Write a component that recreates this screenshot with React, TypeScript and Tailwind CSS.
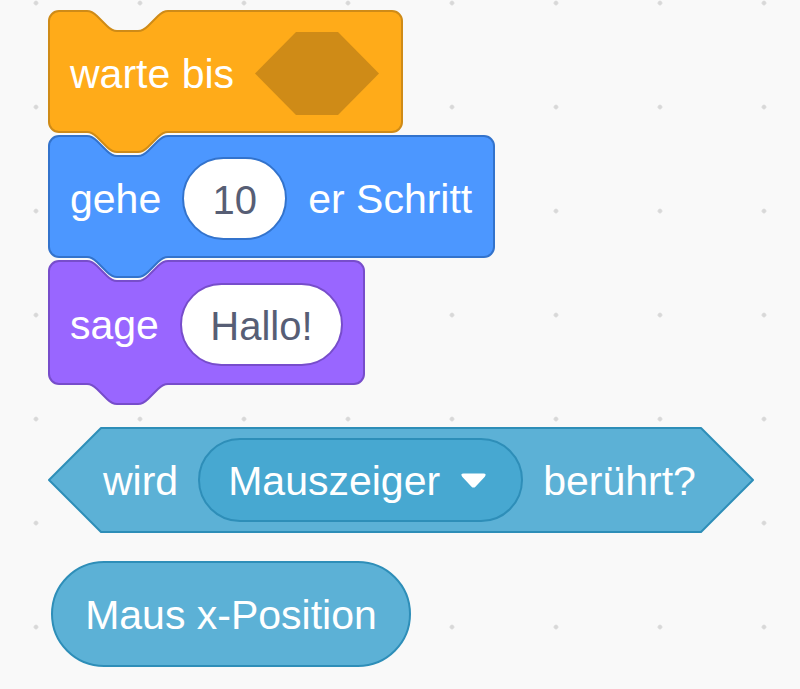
import React from "react";

const FONT = "font-['Liberation_Sans',Arial,Helvetica,sans-serif]";

function stackPath(w: number, h: number) {
  const r = 10;
  const n = 39;
  const notch = "c5,0 7.5,2.5 10,5 l10,10 c2.5,2.5 5,5 10,5 h21 c5,0 7.5,-2.5 10,-5 l10,-10 c2.5,-2.5 5,-5 10,-5";
  const tab = "c-5,0 -7.5,2.5 -10,5 l-10,10 c-2.5,2.5 -5,5 -10,5 h-21 c-5,0 -7.5,-2.5 -10,-5 l-10,-10 c-2.5,-2.5 -5,-5 -10,-5";
  return `M1,${1 + r} a${r},${r} 0 0 1 ${r},-${r} H${n} ${notch} H${w - 1 - r} a${r},${r} 0 0 1 ${r},${r} V${h - 1 - r} a${r},${r} 0 0 1 -${r},${r} H${n + 81} ${tab} H${1 + r} a${r},${r} 0 0 1 -${r},-${r} Z`;
}

function StackBlock({
  width,
  height,
  fill,
  stroke,
  children,
}: {
  width: number;
  height: number;
  fill: string;
  stroke: string;
  children: React.ReactNode;
}) {
  return (
    <div className="relative" style={{ width, height }}>
      {/* block shape lies under the block's content */}
      <svg
        className="pointer-events-none absolute inset-0 overflow-visible"
        width={width}
        height={height + 22}
      >
        <path d={stackPath(width, height)} fill={fill} stroke={stroke} strokeWidth={2} />
      </svg>
      <div className="relative flex h-full items-center gap-[21px] px-[22px] pt-[4px]">{children}</div>
    </div>
  );
}

function Label({ children }: { children: React.ReactNode }) {
  return <span className="block whitespace-nowrap pt-[2px] text-[41px] leading-none text-white">{children}</span>;
}

function TextInput({ value, border, width }: { value: string; border: string; width: string }) {
  return (
    <div
      className={`flex h-[83px] items-center justify-center rounded-full border-2 bg-white pt-[2px] ${border} ${width}`}
    >
      <span className="text-[40px] leading-none text-[#575e75]">{value}</span>
    </div>
  );
}

function DropdownArrow() {
  return (
    <svg width="27" height="17" viewBox="0 0 27 17">
      <path d="M3.5,1.5 H23.5 Q27,1.5 24.8,4.8 L15.7,14.4 Q13.5,16.8 11.3,14.4 L2.2,4.8 Q0,1.5 3.5,1.5 Z" fill="#ffffff" />
    </svg>
  );
}

export default function App() {
  return (
    <div className={`relative h-[689px] w-[800px] overflow-hidden bg-[#f9f9f9] ${FONT}`}>
      <svg className="absolute inset-0" width="800" height="689">
        <defs>
          <pattern id="grid" width="104" height="104" patternUnits="userSpaceOnUse">
            <circle cx="36" cy="3" r="2.3" fill="#e0e0e0" />
            <path d="M34,3 H38 M36,1 V5" stroke="#d6d6d6" strokeWidth="1.2" strokeLinecap="round" />
          </pattern>
        </defs>
        <rect width="800" height="689" fill="url(#grid)" />
      </svg>

      <div className="relative flex flex-col items-start gap-[28px] pl-[48px] pt-[10px]">
        <div className="flex flex-col gap-[2px]">
          <StackBlock width={355} height={123} fill="#ffab19" stroke="#cf8b17">
            <Label>warte bis</Label>
            <svg width="124" height="83" viewBox="0 0 124 83">
              <polygon points="0,41.5 41,0 83,0 124,41.5 83,83 41,83" fill="#cf8b17" />
            </svg>
          </StackBlock>
          <StackBlock width={447} height={123} fill="#4c97ff" stroke="#3373cc">
            <Label>gehe</Label>
            <TextInput value="10" border="border-[#3373cc]" width="w-[105px]" />
            <Label>er Schritt</Label>
          </StackBlock>
          <StackBlock width={317} height={125} fill="#9966ff" stroke="#774dcb">
            <Label>sage</Label>
            <TextInput value="Hallo!" border="border-[#774dcb]" width="w-[163px]" />
          </StackBlock>
        </div>

        <div className="relative mt-[14px] h-[106px] w-[706px]">
          <svg className="pointer-events-none absolute inset-0" width="706" height="106">
            <polygon
              points="1,53 53,1 653,1 705,53 653,105 53,105"
              fill="#5cb1d6"
              stroke="#2e8eb8"
              strokeWidth={2}
              strokeLinejoin="round"
            />
          </svg>
          <div className="relative flex h-full items-center gap-[20px] pl-[55px]">
            <Label>wird</Label>
            <div className="flex h-[84px] w-[325px] items-center gap-[20px] rounded-full border-2 border-[#2e8eb8] bg-[#47a8d1] pl-[28px]">
              <Label>Mauszeiger</Label>
              <DropdownArrow />
            </div>
            <Label>berührt?</Label>
          </div>
        </div>

        <div className="ml-[3px] flex h-[106px] w-[360px] items-center justify-center rounded-full border-2 border-[#2e8eb8] bg-[#5cb1d6]">
          <Label>Maus x-Position</Label>
        </div>
      </div>
    </div>
  );
}
